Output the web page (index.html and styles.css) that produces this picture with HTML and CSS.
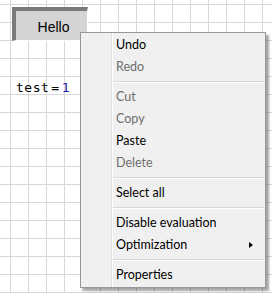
FILE: index.html
```html
<!DOCTYPE html>
<html lang="en">

<head>
  <meta charset="UTF-8">
  <title>Worksheet</title>
  <meta name="viewport" content="width=device-width, initial-scale=1.0">
  <link rel="stylesheet" href="styles.css">
</head>

<body>

  <div class="sheet">
    <button class="hello-btn">Hello</button>
    <div class="formula">test<span class="eq">=</span><span class="num">1</span></div>

    <ul class="menu">
      <li class="item">Undo</li>
      <li class="item disabled">Redo</li>
      <li class="sep"></li>
      <li class="item disabled">Cut</li>
      <li class="item disabled">Copy</li>
      <li class="item">Paste</li>
      <li class="item disabled">Delete</li>
      <li class="sep"></li>
      <li class="item">Select all</li>
      <li class="sep"></li>
      <li class="item">Disable evaluation</li>
      <li class="item sub">Optimization</li>
      <li class="sep"></li>
      <li class="item">Properties</li>
    </ul>
  </div>

</body>

</html>
```

FILE: styles.css
```css
body {
  margin: 0;
  background: #fff;
  overflow: hidden;
}

/* worksheet grid */
.sheet {
  position: relative;
  width: 272px;
  height: 293px;
  background-color: #fff;
  background-image:
    linear-gradient(to right, #d8d8d8 1px, transparent 1px),
    linear-gradient(to bottom, #d8d8d8 1px, transparent 1px);
  background-size: 18px 18px;
  background-position: 10px 4px;
}

.hello-btn {
  position: absolute;
  left: 12px;
  top: 7px;
  width: 76px;
  height: 34px;
  margin: 0;
  padding: 2px 0 0 4px;
  background: #d4d4d4;
  border-style: solid;
  border-width: 4px 1px 1px 4px;
  border-color: #7a7a7a #fff #fff #7a7a7a;
  font-family: "Liberation Sans", Arial, sans-serif;
  font-size: 14px;
  color: #000;
}

.formula {
  position: absolute;
  left: 16px;
  top: 80px;
  font-family: "DejaVu Sans Mono", monospace;
  font-size: 13px;
  color: #000;
  letter-spacing: 0.5px;
}

.formula .eq {
  margin: 0 2px;
}

.formula .num {
  color: #1a1aa8;
}

/* context menu */
.menu {
  position: absolute;
  left: 80px;
  top: 32px;
  width: 184px;
  margin: 0;
  padding: 1px 0;
  list-style: none;
  background: #f0f0f0 linear-gradient(to right, transparent 30px, #e2e2e2 30px, #e2e2e2 31px, #fff 31px, #fff 32px, transparent 32px);
  border: 1px solid #979797;
  box-shadow: 3px 3px 2px rgba(0, 0, 0, 0.35);
  font-family: Lato, "Open Sans", sans-serif;
  font-size: 12.5px;
}

.item {
  position: relative;
  height: 22px;
  line-height: 22px;
  padding-left: 35px;
  color: #000;
}

.item.disabled {
  color: #6d6d6d;
}

.item.sub::after {
  content: "";
  position: absolute;
  right: 12px;
  top: 8px;
  border-left: 4px solid #000;
  border-top: 3.5px solid transparent;
  border-bottom: 3.5px solid transparent;
}

.sep {
  height: 1px;
  margin: 3px 1px 3px 32px;
  background: #d7d7d7;
  border-bottom: 1px solid #fff;
}
```
